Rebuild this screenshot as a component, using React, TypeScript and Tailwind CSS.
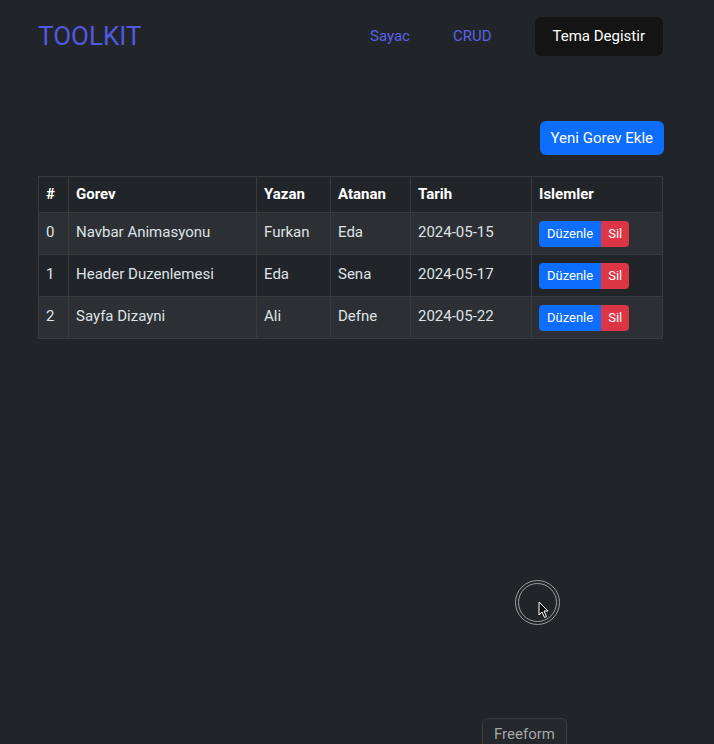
import React from 'react';

interface Gorev {
    id: number;
    baslik: string;
    yazan: string;
    atanan: string;
    tarih: string;
}

const gorevler: Gorev[] = [
    { id: 0, baslik: 'Navbar Animasyonu', yazan: 'Furkan', atanan: 'Eda', tarih: '2024-05-15' },
    { id: 1, baslik: 'Header Duzenlemesi', yazan: 'Eda', atanan: 'Sena', tarih: '2024-05-17' },
    { id: 2, baslik: 'Sayfa Dizayni', yazan: 'Ali', atanan: 'Defne', tarih: '2024-05-22' },
];

export default function App() {
    return (
        <div className="relative min-h-[744px] bg-[#212529] text-[#dee2e6] font-['Roboto',sans-serif] overflow-hidden">
            {/* navbar */}
            <nav className="flex items-center h-[73px] pl-[38px] pr-[51px]">
                <span className="text-[26px] text-[#5458e0]">TOOLKIT</span>
                <div className="ml-auto flex items-center gap-[43px]">
                    <a className="text-[15px] text-[#5a60e8]">Sayac</a>
                    <a className="text-[15px] text-[#5a60e8]">CRUD</a>
                    <button className="h-[39px] px-[18px] rounded-md bg-[#141414] text-white text-[15px]">
                        Tema Degistir
                    </button>
                </div>
            </nav>

            <div className="pl-[38px] pr-[51px] pt-[48px]">
                <div className="flex justify-end mb-[21px]">
                    <button className="h-[34px] px-[11px] mr-[-1px] rounded-md bg-[#0d6efd] text-white text-[15px]">
                        Yeni Gorev Ekle
                    </button>
                </div>

                <table className="w-full table-fixed border-collapse border border-[#373b3e] text-[15px]">
                    <colgroup>
                        <col className="w-[30px]" />
                        <col className="w-[188px]" />
                        <col className="w-[74px]" />
                        <col className="w-[80px]" />
                        <col className="w-[121px]" />
                        <col />
                    </colgroup>
                    <thead>
                        <tr className="h-[36px] text-left text-white">
                            {['#', 'Gorev', 'Yazan', 'Atanan', 'Tarih', 'Islemler'].map(h => (
                                <th key={h} className="px-[7px] font-bold border border-[#373b3e]">{h}</th>
                            ))}
                        </tr>
                    </thead>
                    <tbody>
                        {gorevler.map((g, i) => (
                            <tr key={g.id} className={`h-[42px] ${i % 2 === 0 ? 'bg-[#2c3034]' : 'bg-[#212529]'}`}>
                                <td className="px-[7px] pb-[2px] border border-[#373b3e]">{g.id}</td>
                                <td className="px-[7px] pb-[2px] border border-[#373b3e]">{g.baslik}</td>
                                <td className="px-[7px] pb-[2px] border border-[#373b3e]">{g.yazan}</td>
                                <td className="px-[7px] pb-[2px] border border-[#373b3e]">{g.atanan}</td>
                                <td className="px-[7px] pb-[2px] border border-[#373b3e]">{g.tarih}</td>
                                <td className="px-[7px] border border-[#373b3e]">
                                    <div className="flex">
                                        <button className="h-[26px] px-[8px] rounded-l bg-[#0d6efd] text-white text-[13px]">Düzenle</button>
                                        <button className="h-[26px] px-[7px] rounded-r bg-[#dc3545] text-white text-[13px]">Sil</button>
                                    </div>
                                </td>
                            </tr>
                        ))}
                    </tbody>
                </table>
            </div>

            {/* kayit imleci */}
            <div className="absolute left-[515px] top-[580px] w-[45px] h-[45px] rounded-full border border-[#9a9c9e] flex items-center justify-center">
                <div className="w-[39px] h-[39px] rounded-full border border-[#9a9c9e]" />
                <svg className="absolute left-[22px] top-[20px]" width="12" height="18" viewBox="0 0 12 18">
                    <path d="M1 1 L1 14 L4 11 L6.5 16.5 L8.5 15.5 L6 10 L10 10 Z" fill="#111" stroke="#fff" strokeWidth="1" />
                </svg>
            </div>

            <div className="absolute left-[482px] top-[718px] w-[85px] h-[34px] rounded-md border border-[#3a3d41] bg-[#24272b] text-[#a4a6a8] text-[15px] text-center pt-[4px]">
                Freeform
            </div>
        </div>
    );
}
